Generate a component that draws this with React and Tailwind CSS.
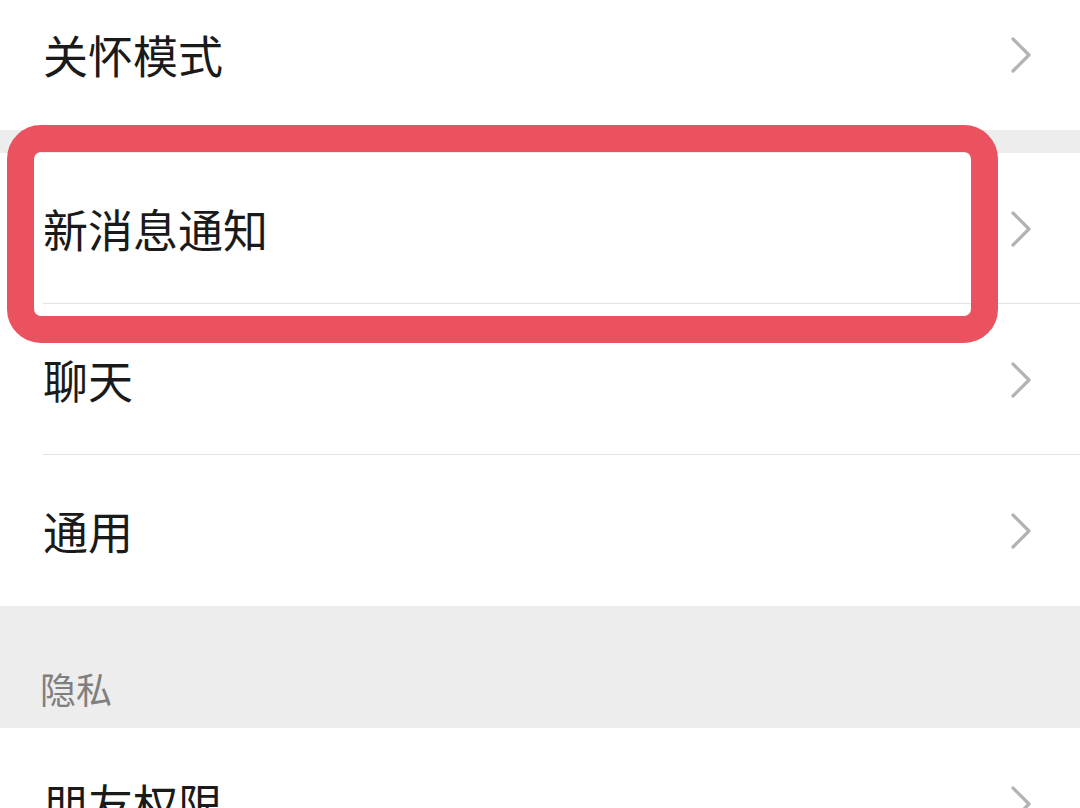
import React from "react";

const Chevron = () => (
  <svg width="22" height="36" viewBox="0 0 22 36" fill="none">
    <path
      d="M3 2 L19 18 L3 34"
      stroke="#b3b3b3"
      strokeWidth="3.2"
      strokeLinecap="round"
      strokeLinejoin="round"
    />
  </svg>
);

const Row = ({ title, divider, className = "" }) => (
  <div className={`relative flex h-[151px] items-center bg-white pl-[43px] pr-[48px] ${className}`}>
    <span className="flex-1 text-[45px] leading-none text-[#1a1a1a]">{title}</span>
    <Chevron />
    {divider && <div className="absolute bottom-0 left-[43px] right-0 h-px bg-[#e3e3e3]" />}
  </div>
);

const App = () => {
  return (
    <div
      className="relative h-[808px] w-[1080px] overflow-hidden bg-[#ededed]"
      style={{ fontFamily: '"Noto Sans CJK SC", "Noto Sans", sans-serif' }}
    >
      <div className="-mt-[21px] flex flex-col">
        <Row title="关怀模式" />
        <div className="h-[23px]" />
        <Row title="新消息通知" divider />
        <Row title="聊天" divider />
        <Row title="通用" />
        <div className="flex h-[122px] items-end pb-[22px] pl-[40px]">
          <span className="text-[36px] leading-none text-[#7f7f7f]">隐私</span>
        </div>
        <Row title="朋友权限" />
      </div>

      {/* highlight frame */}
      <div className="absolute left-[7px] top-[125px] h-[218px] w-[991px] rounded-[34px] border-[27px] border-[#e9525e]" />
    </div>
  );
};

export default App;
